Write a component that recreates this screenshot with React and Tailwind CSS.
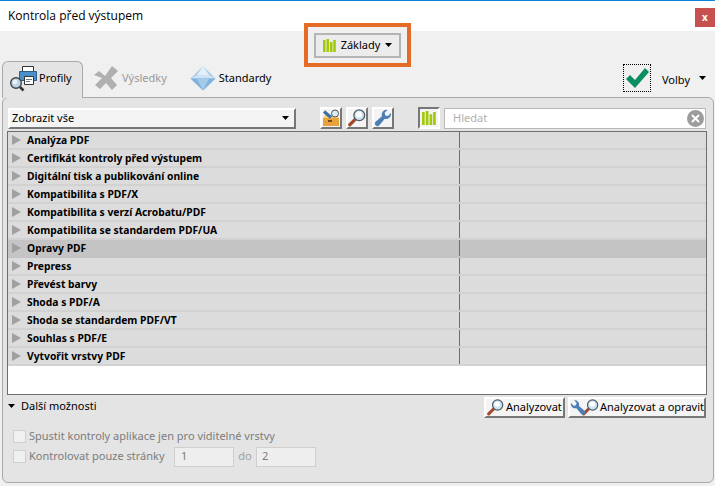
import React from 'react';

const groups = [
    'Analýza PDF',
    'Certifikát kontroly před výstupem',
    'Digitální tisk a publikování online',
    'Kompatibilita s PDF/X',
    'Kompatibilita s verzí Acrobatu/PDF',
    'Kompatibilita se standardem PDF/UA',
    'Opravy PDF',
    'Prepress',
    'Převést barvy',
    'Shoda s PDF/A',
    'Shoda se standardem PDF/VT',
    'Souhlas s PDF/E',
    'Vytvořit vrstvy PDF',
];

const Bars = ({ size = 13 }) => (
    <svg width={size} height={size} viewBox="0 0 13 13">
        <path d="M0 1h2.500v12H0zM3.500 0H6v13H3.500zM7 3h2.500v10H7zM10.300 1h2.500v12h-2.500z" fill="#a2c80c" />
    </svg>
);

const Magnifier = ({ size = 20 }) => (
    <svg width={size} height={size} viewBox="0 0 20 20">
        <path d="M8 11.500 2 17.500" stroke="#a5492a" strokeWidth="3.600" strokeLinecap="round" />
        <circle cx="12.500" cy="7" r="6" fill="#cfe4f2" stroke="#4d5a63" strokeWidth="1.400" />
        <circle cx="12" cy="6" r="3.200" fill="#ffffff" />
    </svg>
);

const Wrench = ({ size = 20, color = '#4d7fb5', className = '' }) => (
    <svg width={size} height={size} viewBox="0 0 20 20" className={className}>
        <path d="M19 5.500a5.500 5.500 0 0 1-7 5.300L6 18a2.800 2.800 0 0 1-4.200-3.800L8.800 8a5.500 5.500 0 0 1 6.200-7L11.800 4.200l.8 3 3 .7L18.700 4.500q.3.500.3 1z" fill={color} />
    </svg>
);

const Chevron = () => (
    <svg width="9" height="10" viewBox="0 0 9 10"><path d="M0 0l9 5-9 5z" fill="#a0a0a0" /></svg>
);

const Caret = ({ className = '' }) => (
    <svg width="7" height="4" viewBox="0 0 7 4" className={className}><path d="M0 0h7L3.500 4z" fill="#000" /></svg>
);

const ToolButton = ({ pressed, children }) => (
    <div className={`w-[22px] h-[22px] flex items-center justify-center bg-[#f4f4f4] border-2 ${pressed ? 'border-t-[#777] border-l-[#777] border-r-white border-b-white' : 'border-t-white border-l-white border-r-[#777] border-b-[#777]'}`}>
        {children}
    </div>
);

export default function App() {
    return (
        <div className="w-[715px] h-[486px] overflow-hidden flex flex-col bg-[#f0f0f0] text-black font-['Noto_Sans',sans-serif] text-[11px] whitespace-nowrap">
            {/* Title bar */}
            <div className="h-[31px] shrink-0 bg-white border-t-[1px] border-[#0a84d8] flex items-start justify-between">
                <span className="ml-2 mt-[6px] text-[12px] leading-[18px] font-['Open_Sans',sans-serif]">Kontrola před výstupem</span>
                <div className="w-5 h-[19px] mt-[7px] bg-[#c75050] text-white font-bold flex items-center justify-center text-[10px]">x</div>
            </div>

            {/* Highlighted profile switch */}
            <div className="flex justify-center -mt-2 relative h-[44px] shrink-0">
                <div className="w-[107px] h-[44px] border-[4px] border-[#e36c27] flex items-center justify-center bg-[#f0f0f0]">
                    <div className="w-[87px] h-[25px] border-2 border-[#b4b4b4] bg-[#ececec] flex items-center justify-center gap-[5px]">
                        <Bars />
                        <span className="text-[11px]">Základy</span>
                        <Caret />
                    </div>
                </div>
            </div>

            {/* Tabs */}
            <div className="h-[31px] shrink-0 flex items-end justify-between -mb-px relative z-10">
                <div className="flex items-end ml-[2px]">
                    <div className="w-[81px] h-[37px] -mt-2 flex items-center gap-[2px] pl-[7px] pb-1 bg-[#e4e4e4] border border-b-0 border-[#a9a9a9] rounded-t-md">
                        <svg width="27" height="27" viewBox="0 0 27 27">
                            <path d="M12.500 1.500h11v7h-11z" fill="#fff" stroke="#333" />
                            <path d="M9.500 6.500h17v9h-17z" fill="#4a8fc9" stroke="#2e5f8a" />
                            <path d="M14.500 11.500h9v8h-9z" fill="#fff" stroke="#333" />
                            <path d="M16 14.500h6M16 16.500h4" stroke="#777" />
                            <path d="M10 22l3.500 3.500" stroke="#333" strokeWidth="2.500" />
                            <circle cx="6" cy="18" r="5.300" fill="#bcd8e8" stroke="#444" strokeWidth="1.400" />
                            <circle cx="5" cy="17" r="2.300" fill="#eaf4fa" />
                        </svg>
                        <span>Profily</span>
                    </div>
                    <div className="flex items-center h-[36px] ml-[10px] gap-[3px] mb-[2px]">
                        <svg width="26" height="26" viewBox="0 0 26 26">
                            <path d="M1 10l5-4 6 5L19 1l6 5-7 7 6 7-5 5-6-7-6 6-5-4 7-7z" fill="#b0b0b0" />
                        </svg>
                        <span className="text-[#9a9a9a]">Výsledky</span>
                    </div>
                    <div className="flex items-center h-[36px] ml-[23px] gap-[3px] mb-[2px]">
                        <svg width="26" height="26" viewBox="0 0 26 26">
                            <path d="M13 1l12.500 12.500L13 25.500.5 13.500z" fill="#a9cde9" />
                            <path d="M13 1l6 9H7z" fill="#e3f0fa" />
                            <path d="M7 10h12l6.500 3.500H.5z" fill="#cfe3f4" />
                            <path d="M.5 13.500h25L13 25.500z" fill="#7fb2de" />
                            <path d="M7 13.500h12l-6 12z" fill="#a3cbea" />
                        </svg>
                        <span>Standardy</span>
                    </div>
                </div>
                <div className="flex items-center h-[36px] mr-[9px] -mt-1">
                    <div className="w-7 h-7 mb-[5px] border border-dotted border-black flex items-center justify-center">
                        <svg width="24" height="22" viewBox="0 0 24 22"><path d="M1 12l4-4 5 5L20 1l4 4-14 16z" fill="#0a9060" /></svg>
                    </div>
                    <span className="ml-[11px]">Volby</span>
                    <Caret className="ml-[9px] mb-1" />
                </div>
            </div>

            {/* Main panel */}
            <div className="flex-1 ml-[2px] mr-px mb-[3px] bg-[#e4e4e4] border border-[#a9a9a9] rounded-md flex flex-col px-[5px] pt-[9px]">
                <div className="h-[22px] flex items-center">
                    <div className="w-[288px] h-[21px] bg-[#f4f4f4] border-2 border-t-white border-l-white border-r-[#777] border-b-[#777] flex items-center justify-between pl-[2px] pr-[5px]">
                        <span>Zobrazit vše</span>
                        <Caret />
                    </div>
                    <div className="ml-[24px] flex gap-[4px]">
                        <ToolButton>
                            <svg width="18" height="18" viewBox="0 0 18 18">
                                <path d="M1 9h16v8H1z" fill="#e8a33d" />
                                <path d="M1 9h16l-2-3H3z" fill="#f5cd7d" />
                                <path d="M6 11h4v2H6z" fill="#7a4a12" />
                                <circle cx="13" cy="4.500" r="3.500" fill="#dcecf6" stroke="#555" />
                                <path d="M2 2.500l7 6" stroke="#3d6fa6" strokeWidth="3.200" />
                            </svg>
                        </ToolButton>
                        <ToolButton><Magnifier size={18} /></ToolButton>
                        <ToolButton><Wrench size={18} /></ToolButton>
                    </div>
                    <div className="ml-[24px]">
                        <ToolButton pressed><Bars size={14} /></ToolButton>
                    </div>
                    <div className="ml-[4px] w-[262px] h-[21px] bg-white border border-[#b8b8b8] flex items-center justify-between pl-2 pr-[1px]">
                        <span className="text-[#b0b0b0]">Hledat</span>
                        <svg width="17" height="17" viewBox="0 0 17 17">
                            <circle cx="8.500" cy="8.500" r="8.500" fill="#9c9c9c" />
                            <path d="M5 5l7 7M12 5l-7 7" stroke="#fff" strokeWidth="2" />
                        </svg>
                    </div>
                </div>

                {/* Profile groups */}
                <div className="mt-[2px] w-[700px] -ml-px h-[264px] shrink-0 bg-white border border-[#6e6e6e]">
                    {groups.map((name) => (
                        <div key={name} className={`h-[18px] flex items-center border-b-2 ${name === 'Opravy PDF' ? 'bg-[#c4c4c4] border-[#c4c4c4]' : 'bg-[#dcdcdc] border-[#d2d2d2]'}`}>
                            <div className="w-[452px] h-full flex items-center pl-[4px] gap-[6px] border-r border-[#6e6e6e]">
                                <Chevron />
                                <span className="font-bold text-[10.300px] leading-none">{name}</span>
                            </div>
                        </div>
                    ))}
                </div>

                <div className="flex items-start justify-between mt-[2px] pr-[1px]">
                    <div className="flex items-center gap-[6px] mt-[1px]">
                        <Caret />
                        <span>Další možnosti</span>
                    </div>
                    <div className="flex gap-[3px] mr-px">
                        <div className="h-[21px] w-[81px] bg-[#f4f4f4] border-2 border-t-white border-l-white border-r-[#777] border-b-[#777] flex items-center pl-[1px] gap-[2px]">
                            <Magnifier size={17} />
                            <span>Analyzovat</span>
                        </div>
                        <div className="h-[21px] w-[138px] bg-[#f4f4f4] border-2 border-t-white border-l-white border-r-[#777] border-b-[#777] flex items-center gap-[1px]">
                            <Wrench size={17} className="-scale-x-100" />
                            <span className="-ml-[5px]"><Magnifier size={17} /></span>
                            <span>Analyzovat a opravit</span>
                        </div>
                    </div>
                </div>

                <div className="mt-[10px] ml-[5px] flex items-center gap-[3px] text-[#7c7c7c]">
                    <div className="w-[13px] h-[13px] bg-[#f0f0f0] border border-[#cfcfcf]" />
                    <span>Spustit kontroly aplikace jen pro viditelné vrstvy</span>
                </div>
                <div className="mt-[2px] ml-[5px] flex items-center text-[#7c7c7c]">
                    <div className="w-[13px] h-[13px] mr-[3px] bg-[#f0f0f0] border border-[#cfcfcf]" />
                    <span className="w-[145px]">Kontrolovat pouze stránky</span>
                    <div className="w-[60px] h-5 bg-[#eeeeee] border border-[#cfcfcf] pl-[6px] leading-[16px]">1</div>
                    <span className="w-[22px] text-center text-[#a0a0a0]">do</span>
                    <div className="w-[60px] h-5 bg-[#eeeeee] border border-[#cfcfcf] pl-[5px] leading-[16px]">2</div>
                </div>
            </div>
        </div>
    );
}
